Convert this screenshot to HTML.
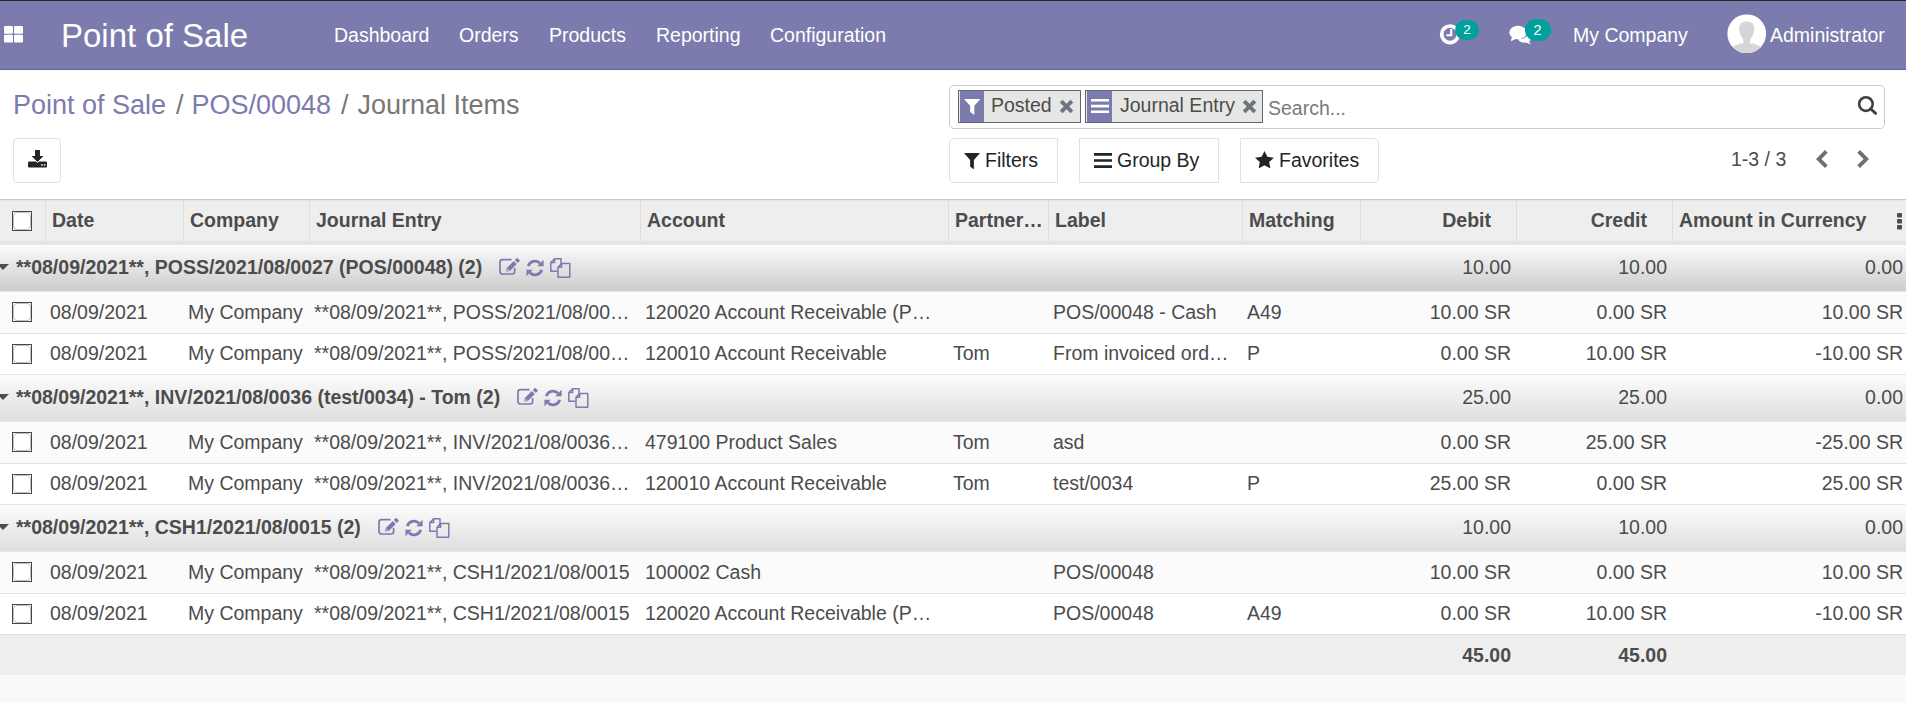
<!DOCTYPE html>
<html>
<head>
<meta charset="utf-8">
<title>Odoo - Journal Items</title>
<style>
*{box-sizing:border-box}
html,body{margin:0;padding:0}
body{width:1906px;height:703px;overflow:hidden;background:#f9f9f9;font-family:"Liberation Sans",Arial,sans-serif;font-size:19.5px;color:#4c4c4c;line-height:1.5;position:relative}
a{text-decoration:none;color:#7c7bad}
.abs{position:absolute;white-space:nowrap}
/* navbar */
.nav{position:absolute;left:0;top:0;width:1906px;height:70px;background:#7c7bad;border-top:1px solid #26262e;border-bottom:1px solid #6564a0;color:#fff}
.nav .brand{position:absolute;left:61px;top:1px;height:68px;line-height:68px;font-size:33px;color:#fff;white-space:nowrap}
.nav .mi{position:absolute;top:0;height:68px;line-height:68px;font-size:19.5px;color:#fff;white-space:nowrap}
.badge{position:absolute;background:#00a09d;color:#fff;text-align:center;white-space:nowrap}
/* control panel */
.cp{position:absolute;left:0;top:70px;width:1906px;height:130px;background:#fff;border-bottom:1px solid #c9c9c9}
.bc{position:absolute;top:17px;font-size:27px;line-height:36px;white-space:nowrap;color:#777}
.bc.l{color:#7c7bad}
.btn{position:absolute;border:1px solid #dee2e6;border-radius:4px;background:#fff;color:#212529;font-size:19.5px;white-space:nowrap}
.btn span{position:absolute;top:0;line-height:43px}
.search{position:absolute;left:949px;top:15px;width:936px;height:44px;border:1px solid #ccc;border-radius:5px;background:#fff}
.facet{position:absolute;top:4px;height:33px;border:1px solid #5e686f;background:#e6e6e4;color:#4c4c4c;white-space:nowrap}
.facet .ic{position:absolute;left:1px;top:0;width:24px;height:31px;background:#7c7bad}
.facet .tx{position:absolute;top:0;line-height:29px;font-size:19.5px}
/* table */
.row{position:absolute;left:0;width:1906px;overflow:hidden}
.row .c{position:absolute;top:0;height:100%;padding:0 6px 0 5px;white-space:nowrap;overflow:hidden;text-overflow:ellipsis}
.row.h{background:#eee;border-top:1px solid #e2e5e9;border-bottom:3px solid #e1e4e8;font-weight:bold}
.row.h .c{padding:0 4px 0 7px;line-height:38px}
.row.h .c.hr{text-align:right;padding-right:25px}
.row.h .sep{position:absolute;left:0;top:0;width:1px;height:40px;background:#dcdcdc}
.row.g{background:linear-gradient(to bottom,#fcfcfc,#dedede);border-top:1px solid #e4e6ea;font-weight:bold}
.row.g.g0{background:linear-gradient(to bottom,#fbfbfb,#cccccc)}
.row.g .gn{position:absolute;left:16px;top:1px;line-height:43px;white-space:nowrap}
.row.g .c.n{font-weight:normal;text-align:right;line-height:45px}
.row.d{background:#fff;border-top:1px solid #dee2e6}
.row.d .c{line-height:39px}
.row.d.o{background:#fbfbfb;border-top:1px solid #e3e6ea}
.row.d.o .c{line-height:41px}
.row .c.r{text-align:right}
.row.f{background:#eee;border-top:1px solid #dee2e6;font-weight:bold}
.row.f .c{text-align:right;line-height:40px}
.cb{position:absolute;width:20px;height:20px;border:1px solid #454545;background:#fff}
.cb:after{content:"";position:absolute;left:0;top:0;right:0;bottom:0;border:1px solid #b9c0c8;border-radius:4px}
.car{position:absolute;left:-3px;top:19px;width:0;height:0;border-left:6px solid transparent;border-right:6px solid transparent;border-top:6px solid #4c4c4c}
.gis{margin-left:17px}
.gi{display:inline-block;vertical-align:middle;margin-top:-1px}
</style>
</head>
<body>
<div class="nav">
  <svg class="abs" style="left:4px;top:25px" width="19" height="16.500" viewBox="0 0 19 16.500"><rect x="0" y="0" width="9" height="7.700" rx="1.200" fill="#fff"/><rect x="10" y="0" width="9" height="7.700" rx="1.200" fill="#fff"/><rect x="0" y="8.700" width="9" height="7.700" rx="1.200" fill="#fff"/><rect x="10" y="8.700" width="9" height="7.700" rx="1.200" fill="#fff"/></svg>
  <div class="brand">Point of Sale</div>
  <div class="mi" style="left:334px">Dashboard</div>
  <div class="mi" style="left:459px">Orders</div>
  <div class="mi" style="left:549px">Products</div>
  <div class="mi" style="left:656px">Reporting</div>
  <div class="mi" style="left:770px">Configuration</div>
  <!-- clock -->
  <svg class="abs" style="left:1439px;top:22px" width="22" height="22" viewBox="0 0 22 22"><circle cx="11" cy="11.300" r="8.300" fill="none" stroke="#fff" stroke-width="3.700"/><path d="M12.200 6v6.200h-4.800" fill="none" stroke="#fff" stroke-width="2.100"/></svg>
  <div class="badge" style="left:1455px;top:19px;width:24px;height:20px;border-radius:10px;font-size:13.5px;line-height:20px">2</div>
  <!-- comments -->
  <svg class="abs" style="left:1508.500px;top:23.800px" width="24" height="21" viewBox="0 0 24 21"><ellipse cx="9" cy="7.500" rx="8.700" ry="6.700" fill="#fff"/><path d="M3.200 11 L1.800 16.300 L8 13.500Z" fill="#fff"/><path transform="translate(-1.200,-1.400)" d="M10 15.500c5 .5 10-2 10.500-6 2 1 3.200 2.500 3.200 4.300 0 1.800-1 3-2.500 4l1.800 3.200-5-2c-3 .5-6.500-.5-8-3.500z" fill="#fff"/></svg>
  <div class="badge" style="left:1524.500px;top:17.500px;width:26px;height:22px;border-radius:11px;font-size:14.500px;line-height:22px">2</div>
  <div class="mi" style="left:1573px">My Company</div>
  <!-- avatar -->
  <svg class="abs" style="left:1726.500px;top:12.500px" width="39.500" height="39.500" viewBox="0 0 40 40"><defs><clipPath id="av"><circle cx="20" cy="20" r="19.600"/></clipPath></defs><circle cx="20" cy="20" r="19.600" fill="#fff"/><g clip-path="url(#av)" fill="#d6d6d6"><path d="M12.400 14.500c0-5 3-7 7.600-7s7.600 2 7.600 7c0 5-2.600 12.500-7.600 12.500s-7.600-7.500-7.600-12.500z"/><rect x="16.500" y="24" width="7" height="8"/><path d="M2 42c0-8 6-10.500 12-12.500l6 1.500 6-1.500c6 2 12 4.500 12 12.500z"/></g></svg>
  <div class="mi" style="left:1770px">Administrator</div>
</div>
<div class="cp">
  <div class="bc l" style="left:13px">Point of Sale</div>
  <div class="bc" style="left:176px">/</div>
  <div class="bc l" style="left:191.500px">POS/00048</div>
  <div class="bc" style="left:341px">/</div>
  <div class="bc" style="left:357.500px">Journal Items</div>
  <!-- export button -->
  <div class="btn" style="left:13px;top:68px;width:48px;height:45px">
    <svg class="abs" style="left:14px;top:11px" width="19" height="17.500" viewBox="0 0 19 17.500"><rect x="0" y="11.500" width="19" height="6" rx="1.200" fill="#212529"/><path d="M7.200 0h4.600v6h3.400L9.500 11.800 3.800 6h3.400z" fill="#212529" stroke="#fff" stroke-width="1.600" paint-order="stroke"/><path d="M7.200 0h4.600v6h3.400L9.500 11.800 3.800 6h3.400z" fill="#212529"/><rect x="13.200" y="14.200" width="1.500" height="1.500" fill="#fff"/><rect x="15.900" y="14.200" width="1.500" height="1.500" fill="#fff"/></svg>
  </div>
  <!-- search -->
  <div class="search">
    <div class="facet" style="left:8px;width:123px">
      <div class="ic"><svg class="abs" style="left:3.500px;top:7.500px" width="16.500" height="16.500" viewBox="0 0 16 17" preserveAspectRatio="none"><path d="M0 0h16l-6 7v9.500l-4-3V7z" fill="#fff"/></svg></div>
      <div class="tx" style="left:32px">Posted</div>
      <svg class="abs" style="left:100px;top:7.500px" width="15" height="15" viewBox="0 0 14 14"><path d="M2 2l10 10M12 2L2 12" stroke="#6c757d" stroke-width="3.600"/></svg>
    </div>
    <div class="facet" style="left:135px;width:178px">
      <div class="ic" style="width:25px"><svg class="abs" style="left:3.700px;top:7.600px" width="18" height="14.200" viewBox="0 0 18 14.200"><path d="M0 1.300h18M0 7.100h18M0 12.900h18" stroke="#fff" stroke-width="2.600"/></svg></div>
      <div class="tx" style="left:34px">Journal Entry</div>
      <svg class="abs" style="left:155.500px;top:7.500px" width="15" height="15" viewBox="0 0 14 14"><path d="M2 2l10 10M12 2L2 12" stroke="#6c757d" stroke-width="3.600"/></svg>
    </div>
    <div class="abs" style="left:318px;top:8px;line-height:29px;color:#757b80">Search...</div>
    <svg class="abs" style="left:907px;top:10px" width="20" height="19" viewBox="0 0 20 19"><circle cx="8.900" cy="8.100" r="6.800" fill="none" stroke="#3f3f3f" stroke-width="2.600"/><path d="M13.600 12.800l5 4.600" stroke="#3f3f3f" stroke-width="2.800" stroke-linecap="round"/></svg>
  </div>
  <!-- buttons -->
  <div class="btn" style="left:949px;top:68px;width:109px;height:45px;border-radius:5px 0 0 5px">
    <svg class="abs" style="left:14px;top:13.500px" width="16" height="16.500" viewBox="0 0 17 18" preserveAspectRatio="none"><path d="M0 0h17l-6.500 7.500v10.500l-4-3.200V7.500z" fill="#212529"/></svg>
    <span style="left:35px">Filters</span>
  </div>
  <div class="btn" style="left:1079px;top:68px;width:140px;height:45px;border-radius:0">
    <svg class="abs" style="left:14px;top:14px" width="18" height="15" viewBox="0 0 18 16" preserveAspectRatio="none"><path d="M0 1.500h18M0 8h18M0 14.500h18" stroke="#212529" stroke-width="2.800"/></svg>
    <span style="left:37px">Group By</span>
  </div>
  <div class="btn" style="left:1240px;top:68px;width:139px;height:45px;border-radius:0 5px 5px 0">
    <svg class="abs" style="left:13.500px;top:11.500px" width="19" height="17.500" viewBox="0 0 20 19" preserveAspectRatio="none"><path d="M10 0l3 6.300 7 .9-5.100 4.800 1.300 6.900L10 15.500 3.800 18.900l1.300-6.900L0 7.200l7-.9z" fill="#212529"/></svg>
    <span style="left:38px">Favorites</span>
  </div>
  <!-- pager -->
  <div class="abs" style="left:1731px;top:75px;line-height:29px;color:#4c4c4c">1-3 / 3</div>
  <svg class="abs" style="left:1815.500px;top:80px" width="12" height="18" viewBox="0 0 12 18"><path d="M0 9L9 0l2.700 2.700L5.400 9l6.300 6.300L9 18z" fill="#6b7075"/></svg>
  <svg class="abs" style="left:1856.500px;top:80px" width="12" height="18" viewBox="0 0 12 18"><path d="M12 9L3 0 0.300 2.700 6.600 9 0.300 15.300 3 18z" fill="#6b7075"/></svg>
</div>
<div class="row h" style="top:200px;height:44px">
<div class="c" style="left:0px;width:45px;padding:0"><span class="cb" style="left:12px;top:10px"></span></div>
<div class="c" style="left:45px;width:138px"><i class="sep"></i>Date</div>
<div class="c" style="left:183px;width:126px"><i class="sep"></i>Company</div>
<div class="c" style="left:309px;width:331px"><i class="sep"></i>Journal Entry</div>
<div class="c" style="left:640px;width:308px"><i class="sep"></i>Account</div>
<div class="c" style="left:948px;width:100px"><i class="sep"></i>Partner…</div>
<div class="c" style="left:1048px;width:194px"><i class="sep"></i>Label</div>
<div class="c" style="left:1242px;width:118px"><i class="sep"></i>Matching</div>
<div class="c hr" style="left:1360px;width:156px"><i class="sep"></i>Debit</div>
<div class="c hr" style="left:1516px;width:156px"><i class="sep"></i>Credit</div>
<div class="c" style="left:1672px;width:234px"><i class="sep"></i>Amount in Currency</div>
<svg class="abs" style="left:1895px;top:12px" width="8" height="18" viewBox="0 0 8 18"><rect x="2" y="0" width="5" height="4.400" rx="1" fill="#4c4c4c"/><rect x="2" y="6" width="5" height="4.400" rx="1" fill="#4c4c4c"/><rect x="2" y="12" width="5" height="4.400" rx="1" fill="#4c4c4c"/></svg>
</div>
<div class="row g g0" style="top:244px;height:47px"><i class="car"></i><div class="gn">**08/09/2021**, POSS/2021/08/0027 (POS/00048) (2)<span class="gis"><svg class="gi" style="margin-top:-4px" width="21" height="17" viewBox="0 0 21 17"><path d="M12.600 1.600H3.400a2.400 2.400 0 0 0-2.400 2.400v9.600a2.400 2.400 0 0 0 2.400 2.400h9.800a2.400 2.400 0 0 0 2.400-2.400V10" fill="none" stroke="#7c7bad" stroke-width="1.700"/><path d="M7.800 10l7-7 3 3-7 7-3.600 0.600z" fill="#7c7bad"/><path d="M15.800 2l1.700-1.700a0.900 0.900 0 0 1 1.200 0l1.800 1.800a0.900 0.900 0 0 1 0 1.200L18.800 5z" fill="#7c7bad"/><path d="M8.600 10.800l1.700 1.700-1.900 0.300z" fill="#ececec"/></svg><svg class="gi" style="margin-left:6px" width="18" height="18" viewBox="0 0 18 18"><path d="M2.300 7.200A7 7 0 0 1 14 4.200M15.700 10.800A7 7 0 0 1 4 13.800" fill="none" stroke="#7c7bad" stroke-width="2.800"/><path d="M17.600 0.800v6.400h-6.400zM0.400 17.200v-6.400h6.400z" fill="#7c7bad"/></svg><svg class="gi" style="margin-left:6px" width="21" height="20" viewBox="0 0 21 20"><path d="M4.600 0.800h6.400v5.400M0.800 4.600v8.600h6.200M0.800 4.600L4.600 0.800v3.800z" fill="none" stroke="#7c7bad" stroke-width="1.500" stroke-linejoin="round"/><path d="M11.600 5.600h8.200v13.600H8V9.200zM8 9.200h3.600V5.600" fill="none" stroke="#7c7bad" stroke-width="1.500" stroke-linejoin="round"/></svg></span></div>
<div class="c n" style="left:1360px;width:156px;padding-right:5px">10.00</div>
<div class="c n" style="left:1516px;width:156px;padding-right:5px">10.00</div>
<div class="c n" style="left:1672px;width:234px;padding-right:3px">0.00</div>
</div>
<div class="row d o" style="top:291px;height:42px">
<span class="cb" style="left:12px;top:10px"></span>
<div class="c" style="left:45px;width:138px">08/09/2021</div>
<div class="c" style="left:183px;width:126px">My Company</div>
<div class="c" style="left:309px;width:331px">**08/09/2021**, POSS/2021/08/0027 (POS/00048)</div>
<div class="c" style="left:640px;width:308px">120020 Account Receivable (PoS)</div>
<div class="c" style="left:1048px;width:194px">POS/00048 - Cash</div>
<div class="c" style="left:1242px;width:118px">A49</div>
<div class="c r" style="left:1360px;width:156px;padding-right:5px">10.00 SR</div>
<div class="c r" style="left:1516px;width:156px;padding-right:5px">0.00 SR</div>
<div class="c r" style="left:1672px;width:234px;padding-right:3px">10.00 SR</div>
</div>
<div class="row d" style="top:333px;height:41px">
<span class="cb" style="left:12px;top:10px"></span>
<div class="c" style="left:45px;width:138px">08/09/2021</div>
<div class="c" style="left:183px;width:126px">My Company</div>
<div class="c" style="left:309px;width:331px">**08/09/2021**, POSS/2021/08/0027 (POS/00048)</div>
<div class="c" style="left:640px;width:308px">120010 Account Receivable</div>
<div class="c" style="left:948px;width:100px">Tom</div>
<div class="c" style="left:1048px;width:194px">From invoiced orders</div>
<div class="c" style="left:1242px;width:118px">P</div>
<div class="c r" style="left:1360px;width:156px;padding-right:5px">0.00 SR</div>
<div class="c r" style="left:1516px;width:156px;padding-right:5px">10.00 SR</div>
<div class="c r" style="left:1672px;width:234px;padding-right:3px">-10.00 SR</div>
</div>
<div class="row g" style="top:374px;height:47px"><i class="car"></i><div class="gn">**08/09/2021**, INV/2021/08/0036 (test/0034) - Tom (2)<span class="gis"><svg class="gi" style="margin-top:-4px" width="21" height="17" viewBox="0 0 21 17"><path d="M12.600 1.600H3.400a2.400 2.400 0 0 0-2.400 2.400v9.600a2.400 2.400 0 0 0 2.400 2.400h9.800a2.400 2.400 0 0 0 2.400-2.400V10" fill="none" stroke="#7c7bad" stroke-width="1.700"/><path d="M7.800 10l7-7 3 3-7 7-3.600 0.600z" fill="#7c7bad"/><path d="M15.800 2l1.700-1.700a0.900 0.900 0 0 1 1.200 0l1.800 1.800a0.900 0.900 0 0 1 0 1.200L18.800 5z" fill="#7c7bad"/><path d="M8.600 10.800l1.700 1.700-1.900 0.300z" fill="#ececec"/></svg><svg class="gi" style="margin-left:6px" width="18" height="18" viewBox="0 0 18 18"><path d="M2.300 7.200A7 7 0 0 1 14 4.200M15.700 10.800A7 7 0 0 1 4 13.800" fill="none" stroke="#7c7bad" stroke-width="2.800"/><path d="M17.600 0.800v6.400h-6.400zM0.400 17.200v-6.400h6.400z" fill="#7c7bad"/></svg><svg class="gi" style="margin-left:6px" width="21" height="20" viewBox="0 0 21 20"><path d="M4.600 0.800h6.400v5.400M0.800 4.600v8.600h6.200M0.800 4.600L4.600 0.800v3.800z" fill="none" stroke="#7c7bad" stroke-width="1.500" stroke-linejoin="round"/><path d="M11.600 5.600h8.200v13.600H8V9.200zM8 9.200h3.600V5.600" fill="none" stroke="#7c7bad" stroke-width="1.500" stroke-linejoin="round"/></svg></span></div>
<div class="c n" style="left:1360px;width:156px;padding-right:5px">25.00</div>
<div class="c n" style="left:1516px;width:156px;padding-right:5px">25.00</div>
<div class="c n" style="left:1672px;width:234px;padding-right:3px">0.00</div>
</div>
<div class="row d o" style="top:421px;height:42px">
<span class="cb" style="left:12px;top:10px"></span>
<div class="c" style="left:45px;width:138px">08/09/2021</div>
<div class="c" style="left:183px;width:126px">My Company</div>
<div class="c" style="left:309px;width:331px">**08/09/2021**, INV/2021/08/0036 (test/0034) - Tom</div>
<div class="c" style="left:640px;width:308px">479100 Product Sales</div>
<div class="c" style="left:948px;width:100px">Tom</div>
<div class="c" style="left:1048px;width:194px">asd</div>
<div class="c r" style="left:1360px;width:156px;padding-right:5px">0.00 SR</div>
<div class="c r" style="left:1516px;width:156px;padding-right:5px">25.00 SR</div>
<div class="c r" style="left:1672px;width:234px;padding-right:3px">-25.00 SR</div>
</div>
<div class="row d" style="top:463px;height:41px">
<span class="cb" style="left:12px;top:10px"></span>
<div class="c" style="left:45px;width:138px">08/09/2021</div>
<div class="c" style="left:183px;width:126px">My Company</div>
<div class="c" style="left:309px;width:331px">**08/09/2021**, INV/2021/08/0036 (test/0034) - Tom</div>
<div class="c" style="left:640px;width:308px">120010 Account Receivable</div>
<div class="c" style="left:948px;width:100px">Tom</div>
<div class="c" style="left:1048px;width:194px">test/0034</div>
<div class="c" style="left:1242px;width:118px">P</div>
<div class="c r" style="left:1360px;width:156px;padding-right:5px">25.00 SR</div>
<div class="c r" style="left:1516px;width:156px;padding-right:5px">0.00 SR</div>
<div class="c r" style="left:1672px;width:234px;padding-right:3px">25.00 SR</div>
</div>
<div class="row g" style="top:504px;height:47px"><i class="car"></i><div class="gn">**08/09/2021**, CSH1/2021/08/0015 (2)<span class="gis"><svg class="gi" style="margin-top:-4px" width="21" height="17" viewBox="0 0 21 17"><path d="M12.600 1.600H3.400a2.400 2.400 0 0 0-2.400 2.400v9.600a2.400 2.400 0 0 0 2.400 2.400h9.800a2.400 2.400 0 0 0 2.400-2.400V10" fill="none" stroke="#7c7bad" stroke-width="1.700"/><path d="M7.800 10l7-7 3 3-7 7-3.600 0.600z" fill="#7c7bad"/><path d="M15.800 2l1.700-1.700a0.900 0.900 0 0 1 1.200 0l1.800 1.800a0.900 0.900 0 0 1 0 1.200L18.800 5z" fill="#7c7bad"/><path d="M8.600 10.800l1.700 1.700-1.900 0.300z" fill="#ececec"/></svg><svg class="gi" style="margin-left:6px" width="18" height="18" viewBox="0 0 18 18"><path d="M2.300 7.200A7 7 0 0 1 14 4.200M15.700 10.800A7 7 0 0 1 4 13.800" fill="none" stroke="#7c7bad" stroke-width="2.800"/><path d="M17.600 0.800v6.400h-6.400zM0.400 17.200v-6.400h6.400z" fill="#7c7bad"/></svg><svg class="gi" style="margin-left:6px" width="21" height="20" viewBox="0 0 21 20"><path d="M4.600 0.800h6.400v5.400M0.800 4.600v8.600h6.200M0.800 4.600L4.600 0.800v3.800z" fill="none" stroke="#7c7bad" stroke-width="1.500" stroke-linejoin="round"/><path d="M11.600 5.600h8.200v13.600H8V9.200zM8 9.200h3.600V5.600" fill="none" stroke="#7c7bad" stroke-width="1.500" stroke-linejoin="round"/></svg></span></div>
<div class="c n" style="left:1360px;width:156px;padding-right:5px">10.00</div>
<div class="c n" style="left:1516px;width:156px;padding-right:5px">10.00</div>
<div class="c n" style="left:1672px;width:234px;padding-right:3px">0.00</div>
</div>
<div class="row d o" style="top:551px;height:42px">
<span class="cb" style="left:12px;top:10px"></span>
<div class="c" style="left:45px;width:138px">08/09/2021</div>
<div class="c" style="left:183px;width:126px">My Company</div>
<div class="c" style="left:309px;width:331px">**08/09/2021**, CSH1/2021/08/0015</div>
<div class="c" style="left:640px;width:308px">100002 Cash</div>
<div class="c" style="left:1048px;width:194px">POS/00048</div>
<div class="c r" style="left:1360px;width:156px;padding-right:5px">10.00 SR</div>
<div class="c r" style="left:1516px;width:156px;padding-right:5px">0.00 SR</div>
<div class="c r" style="left:1672px;width:234px;padding-right:3px">10.00 SR</div>
</div>
<div class="row d" style="top:593px;height:41px">
<span class="cb" style="left:12px;top:10px"></span>
<div class="c" style="left:45px;width:138px">08/09/2021</div>
<div class="c" style="left:183px;width:126px">My Company</div>
<div class="c" style="left:309px;width:331px">**08/09/2021**, CSH1/2021/08/0015</div>
<div class="c" style="left:640px;width:308px">120020 Account Receivable (PoS)</div>
<div class="c" style="left:1048px;width:194px">POS/00048</div>
<div class="c" style="left:1242px;width:118px">A49</div>
<div class="c r" style="left:1360px;width:156px;padding-right:5px">0.00 SR</div>
<div class="c r" style="left:1516px;width:156px;padding-right:5px">10.00 SR</div>
<div class="c r" style="left:1672px;width:234px;padding-right:3px">-10.00 SR</div>
</div>
<div class="row f" style="top:634px;height:41px"><div class="c" style="left:1360px;width:156px;padding-right:5px">45.00</div><div class="c" style="left:1516px;width:156px;padding-right:5px">45.00</div></div>
</body>
</html>
